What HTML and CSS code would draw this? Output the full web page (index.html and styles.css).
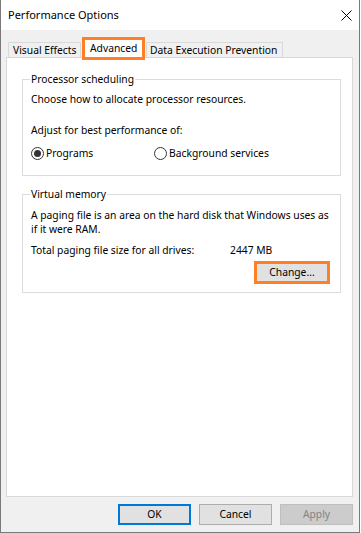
FILE: index.html
```html
<!DOCTYPE html>
<html>
<head>
<meta charset="utf-8">
<link rel="stylesheet" href="styles.css">
</head>
<body>
<div class="window">
  <div class="titlebar">
    <span class="title">Performance Options</span>
    <svg class="close" width="11" height="11" viewBox="0 0 11 11"><path d="M0.5 0.5 L10.5 10.5 M10.5 0.5 L0.5 10.5" stroke="#000" stroke-width="1" fill="none"/></svg>
  </div>
  <div class="body">
    <div class="tabs">
      <div class="tab tab-ve">Visual Effects</div>
      <div class="tab tab-adv selected">Advanced</div>
      <div class="tab tab-dep">Data Execution Prevention</div>
    </div>
    <div class="panel">
      <fieldset class="group group-proc">
        <legend>Processor scheduling</legend>
        <p class="line">Choose how to allocate processor resources.</p>
        <p class="line adjust">Adjust for best performance of:</p>
        <div class="radios">
          <label class="radio first"><span class="circle checked"></span>Programs</label>
          <label class="radio"><span class="circle"></span>Background services</label>
        </div>
      </fieldset>
      <fieldset class="group group-vm">
        <legend>Virtual memory</legend>
        <p class="line para">A paging file is an area on the hard disk that Windows uses as<br>if it were RAM.</p>
        <div class="total">
          <span class="total-label">Total paging file size for all drives:</span>
          <span class="total-value">2447 MB</span>
        </div>
        <div class="change-row">
          <button class="btn change">Change...</button>
        </div>
      </fieldset>
    </div>
    <div class="buttons">
      <button class="btn ok">OK</button>
      <button class="btn">Cancel</button>
      <button class="btn disabled">Apply</button>
    </div>
  </div>
</div>
</body>
</html>
```

FILE: styles.css
```css
* { box-sizing: border-box; }
html, body { margin: 0; padding: 0; background: #ffffff; }
body {
  font-family: "Noto Sans", "Open Sans", "DejaVu Sans", sans-serif;
  font-size: 10.3px;
  color: #000;
}
.window {
  width: 360px;
  height: 533px;
  border: 1px solid #7a7a7a;
  border-top: none;
  display: flex;
  flex-direction: column;
  background: #f0f0f0;
}
.titlebar {
  height: 30px;
  background: #fff;
  display: flex;
  align-items: center;
  padding-left: 7px;
  padding-right: 7px;
  justify-content: space-between;
}
.title { font-size: 11px; line-height: 16px; }
.close { width: 11px; height: 11px; margin-right: 0px; }
.body {
  flex: 1;
  padding: 7px 6px 0 5px;
  display: flex;
  flex-direction: column;
}
.tabs {
  display: flex;
  align-items: flex-end;
  height: 20px;
  margin-left: 2px;
}
.tab {
  height: 15px;
  border: 1px solid #d9d9d9;
  border-bottom: none;
  background: #f0f0f0;
  line-height: 14px;
  padding-left: 4px;
  white-space: nowrap;
}
.tab-ve { width: 73px; }
.tab-dep { width: 137px; padding-left: 3px; }
.tab.selected {
  width: 63px;
  height: 23px;
  margin: 0 1px -3px 1px;
  border: 3px solid #ff7f27;
  background: #fff;
  position: relative;
  z-index: 1;
  padding-left: 5px;
  line-height: 14px;
  padding-top: 1px;
}
.panel {
  width: 347px;
  height: 440px;
  background: #fff;
  border: 1px solid #d9d9d9;
  padding: 14px 11px 0 15px;
}
.group {
  margin: 0;
  border: 1px solid #dcdcdc;
  padding: 0 10px 0 8px;
  min-width: 0;
}
.group legend {
  padding: 0 1px;
  margin-left: -1px;
  line-height: 14px;
}
.line { margin: 0; line-height: 13px; white-space: nowrap; }
.group-proc { height: 104px; padding-top: 7px; }
.adjust { margin-top: 18px; }
.radios { display: flex; margin-top: 10px; line-height: 13px; }
.radio { display: flex; align-items: center; }
.radio.first { width: 123px; }
.circle {
  width: 13px;
  height: 13px;
  border: 1px solid #333;
  border-radius: 50%;
  margin-right: 2px;
  display: flex;
  align-items: center;
  justify-content: center;
  background: #fff;
}
.circle.checked::after {
  content: "";
  width: 7px;
  height: 7px;
  border-radius: 50%;
  background: #333;
}
.group-vm { margin-top: 11px; height: 106px; padding-top: 8px; }
.para { line-height: 13.5px; }
.total { display: flex; margin-top: 8px; line-height: 13px; }
.total-label { width: 199px; }
.change-row { display: flex; justify-content: flex-end; margin-top: 4px; }
.btn {
  font-family: inherit;
  font-size: 10.3px;
  color: #000;
  background: #e1e1e1;
  border: 1px solid #adadad;
  padding: 0;
  width: 73px;
  height: 21px;
  line-height: 17px;
}
.btn.change {
  width: 76px;
  height: 23px;
  border: 3px solid #ff7f27;
}
.buttons {
  display: flex;
  justify-content: flex-end;
  gap: 8px;
  margin-top: 7px;
}
.btn.ok { border: 2px solid #0078d7; }
.btn.disabled { background: #cccccc; border-color: #bfbfbf; color: #838383; }
```
